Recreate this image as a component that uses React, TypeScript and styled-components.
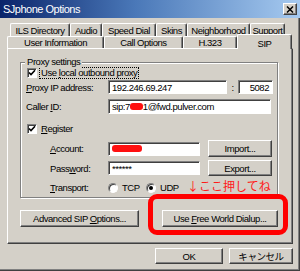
import React from "react";
import styled, { createGlobalStyle } from "styled-components";

const Global = createGlobalStyle`
  html, body { margin: 0; padding: 0; background: #d4d0c8; }
  body {
    font-family: "Liberation Sans", "Noto Sans CJK JP", sans-serif;
    font-size: 9.5px;
    letter-spacing: -0.45px;
    color: #000;
  }
  #root { width: 300px; height: 271px; }
`;

const Window = styled.div`
  position: relative;
  width: 300px;
  height: 271px;
  box-sizing: border-box;
  background: #d4d0c8;
  display: flex;
  flex-direction: column;
  overflow: hidden;
  box-shadow: inset -1px -1px 0 #404040, inset -2px -2px 0 #808080;
`;

const TitleBar = styled.div`
  flex: none;
  height: 18px;
  box-sizing: border-box;
  padding: 0 3px 0 3px;
  display: flex;
  align-items: center;
  justify-content: space-between;
  background: linear-gradient(90deg, #0a246a 0%, #4a78b8 45%, #a6caf0 100%);
`;

const Title = styled.span`
  color: #fff;
  font-size: 11px;
  letter-spacing: -0.5px;
`;

const CloseButton = styled.div`
  width: 14px;
  height: 12px;
  box-sizing: border-box;
  background: #d4d0c8;
  border: 1px solid;
  border-color: #fff #404040 #404040 #fff;
  box-shadow: inset -1px -1px 0 #808080;
  display: flex;
  align-items: center;
  justify-content: center;
`;

const TabArea = styled.div`
  margin-top: 5px;
  display: flex;
  flex-direction: column;
`;

const TabRow = styled.div<{ $indent: number; $h: number }>`
  display: flex;
  align-items: flex-end;
  height: ${(p) => p.$h}px;
  padding-left: ${(p) => p.$indent}px;
`;

const Tab = styled.div<{ $w: number; $active?: boolean }>`
  position: relative;
  width: ${(p) => p.$w}px;
  height: ${(p) => (p.$active ? "calc(100% + 3px)" : "100%")};
  margin-bottom: ${(p) => (p.$active ? "-1px" : "0")};
  z-index: ${(p) => (p.$active ? 2 : 1)};
  box-sizing: border-box;
  background: #d4d0c8;
  border-top: 1px solid #fff;
  border-left: 1px solid #fff;
  border-right: 1px solid #404040;
  border-radius: 2px 2px 0 0;
  box-shadow: inset -1px 0 0 #808080;
  display: flex;
  align-items: ${(p) => (p.$active ? "flex-start" : "center")};
  padding-top: ${(p) => (p.$active ? "3px" : "0")};
  justify-content: center;
  white-space: nowrap;
`;

const Panel = styled.div`
  position: relative;
  z-index: 1;
  margin: 0 7px;
  height: 196px;
  box-sizing: border-box;
  border: 1px solid;
  border-color: #fff #404040 #404040 #fff;
  box-shadow: inset -1px -1px 0 #808080;
  padding: 13px 14px 0 12px;
  display: flex;
  flex-direction: column;
`;

const GroupBox = styled.div`
  position: relative;
  height: 136px;
  box-sizing: border-box;
  border: 1px solid #808080;
  box-shadow: inset 1px 1px 0 #fff, 1px 1px 0 #fff;
  padding: 0 5px;
  display: flex;
  flex-direction: column;
`;

const Legend = styled.span`
  position: absolute;
  left: 4px;
  top: -7px;
  padding: 0 2px;
  background: #d4d0c8;
  line-height: 12px;
`;

const Row = styled.div<{ $top: number; $h: number }>`
  display: flex;
  align-items: center;
  margin-top: ${(p) => p.$top}px;
  height: ${(p) => p.$h}px;
`;

const Label = styled.span<{ $w: number; $indent?: number }>`
  flex: none;
  width: ${(p) => p.$w}px;
  margin-left: ${(p) => p.$indent ?? 0}px;
  white-space: nowrap;
`;

const Key = styled.span`
  text-decoration: underline;
  text-underline-offset: 1px;
`;

const Input = styled.div<{ $w: number; $h: number; $right?: boolean }>`
  flex: none;
  width: ${(p) => p.$w}px;
  height: ${(p) => p.$h}px;
  box-sizing: border-box;
  background: #fff;
  border: 1px solid;
  border-color: #808080 #fff #fff #808080;
  box-shadow: inset 1px 1px 0 #404040;
  padding: 0 3px;
  display: flex;
  align-items: center;
  justify-content: ${(p) => (p.$right ? "flex-end" : "flex-start")};
  white-space: nowrap;
  overflow: hidden;
`;

const Redact = styled.span<{ $w: number }>`
  display: inline-block;
  width: ${(p) => p.$w}px;
  height: 7px;
  background: #ff1010;
  border-radius: 3px;
`;

const Colon = styled.span`
  flex: none;
  width: 11px;
  text-align: center;
`;

const CheckBox = styled.span`
  flex: none;
  width: 10px;
  height: 10px;
  margin-left: 1px;
  box-sizing: border-box;
  background: #fff;
  border: 1px solid;
  border-color: #808080 #fff #fff #808080;
  box-shadow: inset 1px 1px 0 #404040;
  display: flex;
  align-items: center;
  justify-content: center;
`;

const CheckLabel = styled.span<{ $focus?: boolean }>`
  margin-left: 2px;
  padding: 0 1px;
  line-height: 10px;
  border: 1px dotted ${(p) => (p.$focus ? "#000" : "transparent")};
  white-space: nowrap;
`;

const RadioOption = styled.span<{ $w: number }>`
  flex: none;
  width: ${(p) => p.$w}px;
  display: flex;
  align-items: center;
  gap: 4px;
`;

const Radio = styled.span<{ $on?: boolean }>`
  position: relative;
  flex: none;
  width: 10px;
  height: 10px;
  box-sizing: border-box;
  border-radius: 50%;
  background: #fff;
  border: 1px solid;
  border-color: #808080 #fff #fff #808080;
  box-shadow: inset 1px 1px 0 #404040;
  &::after {
    content: "";
    display: ${(p) => (p.$on ? "block" : "none")};
    position: absolute;
    left: 2px;
    top: 2px;
    width: 4px;
    height: 4px;
    border-radius: 50%;
    background: #000;
  }
`;

const Button = styled.button<{ $w: number; $h: number }>`
  flex: none;
  width: ${(p) => p.$w}px;
  height: ${(p) => p.$h}px;
  box-sizing: border-box;
  margin: 0;
  padding: 0;
  background: #d4d0c8;
  border: 1px solid;
  border-color: #fff #404040 #404040 #fff;
  box-shadow: inset -1px -1px 0 #808080;
  font: inherit;
  letter-spacing: inherit;
  color: #000;
  white-space: nowrap;
`;

const SideButton = styled(Button)`
  margin-left: 8px;
`;

const ButtonRow = styled.div`
  margin-top: 12px;
  display: flex;
  justify-content: space-between;
`;

const DialogButtons = styled.div`
  margin-top: 4px;
  padding-right: 7px;
  display: flex;
  justify-content: flex-end;
  gap: 6px;
`;

const Note = styled.span`
  position: absolute;
  left: 187px;
  top: 179px;
  color: #ff1a1a;
  font-family: "Noto Sans CJK JP", sans-serif;
  font-size: 12px;
  letter-spacing: 0;
  line-height: 14px;
  white-space: nowrap;
`;

const Highlight = styled.div`
  position: absolute;
  left: 148px;
  top: 194px;
  width: 140px;
  height: 41px;
  box-sizing: border-box;
  border: 5px solid #ff0000;
  border-radius: 9px;
  pointer-events: none;
  z-index: 5;
`;

const Check = () => (
  <svg width="8" height="8" viewBox="0 0 8 8">
    <path d="M1 3.5 L3 5.5 L7 1.2" fill="none" stroke="#000" strokeWidth="1.6" />
  </svg>
);

const CloseX = () => (
  <svg width="8" height="7" viewBox="0 0 8 7">
    <path d="M1 0.5 L7 6.5 M7 0.5 L1 6.5" stroke="#000" strokeWidth="1.5" />
  </svg>
);

export default function App() {
  return (
    <>
      <Global />
      <Window>
        <TitleBar>
          <Title>SJphone Options</Title>
          <CloseButton>
            <CloseX />
          </CloseButton>
        </TitleBar>

        <TabArea>
          <TabRow $indent={10} $h={13}>
            <Tab $w={60}>ILS Directory</Tab>
            <Tab $w={32}>Audio</Tab>
            <Tab $w={54}>Speed Dial</Tab>
            <Tab $w={31}>Skins</Tab>
            <Tab $w={63}>Neighborhood</Tab>
            <Tab $w={35}>Support</Tab>
          </TabRow>
          <TabRow $indent={7} $h={12}>
            <Tab $w={97}>User Information</Tab>
            <Tab $w={79}>Call Options</Tab>
            <Tab $w={54}>H.323</Tab>
            <Tab $w={55} $active>
              SIP
            </Tab>
          </TabRow>
        </TabArea>

        <Panel>
          <GroupBox>
            <Legend>Proxy settings</Legend>
            <Row $top={4} $h={12}>
              <CheckBox>
                <Check />
              </CheckBox>
              <CheckLabel $focus>
                Use <Key>l</Key>ocal outbound proxy
              </CheckLabel>
            </Row>
            <Row $top={1} $h={14}>
              <Label $w={82}>
                <Key>P</Key>roxy IP address:
              </Label>
              <Input $w={119} $h={14}>
                192.246.69.247
              </Input>
              <Colon>:</Colon>
              <Input $w={35} $h={14} $right>
                5082
              </Input>
            </Row>
            <Row $top={5} $h={15}>
              <Label $w={82}>
                Caller <Key>I</Key>D:
              </Label>
              <Input $w={163} $h={15}>
                sip:7<Redact $w={13} />1@fwd.pulver.com
              </Input>
            </Row>
            <Row $top={9} $h={12}>
              <CheckBox>
                <Check />
              </CheckBox>
              <CheckLabel>
                <Key>R</Key>egister
              </CheckLabel>
            </Row>
            <Row $top={5} $h={17}>
              <Label $w={58} $indent={24}>
                <Key>A</Key>ccount:
              </Label>
              <Input $w={92} $h={14}>
                <Redact $w={30} />
              </Input>
              <SideButton $w={64} $h={17}>
                Import...
              </SideButton>
            </Row>
            <Row $top={3} $h={16}>
              <Label $w={58} $indent={24}>
                Pass<Key>w</Key>ord:
              </Label>
              <Input $w={92} $h={14}>
                ******
              </Input>
              <SideButton $w={64} $h={16}>
                Export...
              </SideButton>
            </Row>
            <Row $top={6} $h={11}>
              <Label $w={58} $indent={24}>
                <Key>T</Key>ransport:
              </Label>
              <RadioOption $w={38}>
                <Radio />
                TCP
              </RadioOption>
              <RadioOption $w={40}>
                <Radio $on />
                UDP
              </RadioOption>
            </Row>
          </GroupBox>

          <ButtonRow>
            <Button $w={119} $h={17}>
              Advanced SIP <Key>O</Key>ptions...
            </Button>
            <Button $w={116} $h={17}>
              Use <Key>F</Key>ree World Dialup...
            </Button>
          </ButtonRow>
        </Panel>

        <DialogButtons>
          <Button $w={68} $h={16}>
            OK
          </Button>
          <Button $w={64} $h={16}>
            キャンセル
          </Button>
        </DialogButtons>

        <Note>↓ここ押してね</Note>
        <Highlight />
      </Window>
    </>
  );
}
